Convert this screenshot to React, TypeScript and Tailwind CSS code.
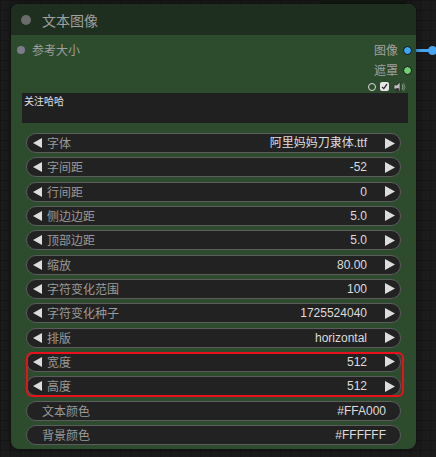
const font = "font-['Noto_Sans_CJK_SC','Noto_Sans',sans-serif]";

type Row = { label: string; value: string; arrows?: boolean };

const rows: Row[] = [
  { label: "字体", value: "阿里妈妈刀隶体.ttf", arrows: true },
  { label: "字间距", value: "-52", arrows: true },
  { label: "行间距", value: "0", arrows: true },
  { label: "侧边边距", value: "5.0", arrows: true },
  { label: "顶部边距", value: "5.0", arrows: true },
  { label: "缩放", value: "80.00", arrows: true },
  { label: "字符变化范围", value: "100", arrows: true },
  { label: "字符变化种子", value: "1725524040", arrows: true },
  { label: "排版", value: "horizontal", arrows: true },
  { label: "宽度", value: "512", arrows: true },
  { label: "高度", value: "512", arrows: true },
  { label: "文本颜色", value: "#FFA000" },
  { label: "背景颜色", value: "#FFFFFF" },
];

function Widget({ row }: { row: Row }) {
  return (
    <div className="flex h-5 shrink-0 items-center rounded-full border border-[#5c5c5c] bg-[#222222] text-[12px] leading-none">
      {row.arrows ? (
        <>
          <svg width="9" height="10" viewBox="0 0 9 10" className="ml-[6px] shrink-0">
            <path d="M0 5 L9 0 L9 10 Z" fill="#dddddd" />
          </svg>
          <span className="ml-[5px] text-[#9a9a9a]">{row.label}</span>
          <span className="ml-auto font-['Liberation_Sans','Noto_Sans_CJK_SC',sans-serif] text-[#dddddd]">
            {row.value}
          </span>
          <svg width="10" height="11" viewBox="0 0 10 11" className="ml-[18px] mr-[5px] shrink-0">
            <path d="M0 0 L10 5.5 L0 11 Z" fill="#dddddd" />
          </svg>
        </>
      ) : (
        <>
          <span className="ml-[15px] text-[#9a9a9a]">{row.label}</span>
          <span className="ml-auto mr-[14px] font-['Liberation_Sans',sans-serif] text-[#dddddd]">
            {row.value}
          </span>
        </>
      )}
    </div>
  );
}

export default function App() {
  return (
    <div
      className={`relative h-[457px] w-[436px] overflow-hidden bg-[#1b1b1b] bg-[linear-gradient(#151515_1px,transparent_1px),linear-gradient(90deg,#151515_1px,transparent_1px)] bg-[size:10px_10px] ${font}`}
    >
      {/* bottom of node above */}
      <div className="absolute left-[320px] top-0 h-[4px] w-[87px] rounded-b-[6px] bg-[#131813]" />

      {/* link going out */}
      <div className="absolute left-[410px] top-[49px] h-[3px] w-[30px] bg-[#47a6f0]" />
      <div className="absolute left-[428px] top-[46px] h-[9px] w-[9px] rounded-full bg-[#47a6f0]" />

      {/* node */}
      <div className="absolute left-[11px] top-[4px] flex h-[445px] w-[405px] flex-col overflow-hidden rounded-[8px] bg-[#2d4c2e] shadow-[0_0_6px_rgba(0,0,0,0.5)]">
        <div className="flex h-[31px] shrink-0 items-center bg-[#1e2f1f]">
          <div className="ml-[10px] h-[10px] w-[10px] rounded-full bg-[#6b6b6b]" />
          <span className="ml-[11px] text-[14px] leading-none text-[#a0a0a0]">文本图像</span>
        </div>

        <div className="flex flex-1 flex-col pt-[5px]">
          <div className="flex h-5 items-center">
            <div className="ml-[6px] h-[8px] w-[8px] rounded-full bg-[#7c7c8c]" />
            <span className="ml-[7px] text-[12px] leading-none text-[#a0a0a0]">参考大小</span>
            <span className="ml-auto text-[12px] leading-none text-[#a0a0a0]">图像</span>
            <div className="ml-[5px] mr-[4px] h-[9px] w-[9px] rounded-full border border-[#111] bg-[#3ea6f5]" />
          </div>
          <div className="flex h-5 items-center justify-end">
            <span className="text-[12px] leading-none text-[#a0a0a0]">遮罩</span>
            <div className="ml-[5px] mr-[4px] h-[9px] w-[9px] rounded-full border border-[#111] bg-[#6fd06f]" />
          </div>
          <div className="flex h-[13px] items-center justify-end gap-[4px] pr-[10px]">
            <div className="h-[8px] w-[8px] rounded-full border border-[#dddddd]" />
            <div className="flex h-[9px] w-[9px] items-center justify-center rounded-[2px] bg-[#e6e6e6]">
              <svg width="7" height="7" viewBox="0 0 7 7">
                <path d="M1 3.8 L2.8 5.6 L6 1.2" stroke="#222" strokeWidth="1.2" fill="none" />
              </svg>
            </div>
            <svg width="13" height="12" viewBox="0 0 13 12">
              <path d="M1 4 H4 L7 1 V11 L4 8 H1 Z" fill="#bdbdbd" stroke="#222" strokeWidth="0.6" />
              <path d="M9 3.5 Q11 6 9 8.5" stroke="#8aa08a" strokeWidth="1.1" fill="none" />
              <path d="M10.5 2 Q13.5 6 10.5 10" stroke="#6e8a6e" strokeWidth="1" fill="none" />
              <circle cx="4.5" cy="9" r="2" fill="#333" />
            </svg>
          </div>
          <div className="ml-[11px] mr-[8px] h-[30px] bg-[#202020] px-[2px] pt-[3px] text-[10px] leading-none text-[#e0e0e0]">
            关注哈哈
          </div>

          <div className="relative mx-[15px] mt-[10px] flex flex-col gap-[4.33px]">
            {rows.map((r) => (
              <Widget key={r.label} row={r} />
            ))}
            <div className="absolute left-[0px] right-[-3px] top-[219px] h-[45px] rounded-[6px] border-2 border-[#e8101c]" />
          </div>
        </div>
      </div>
    </div>
  );
}
